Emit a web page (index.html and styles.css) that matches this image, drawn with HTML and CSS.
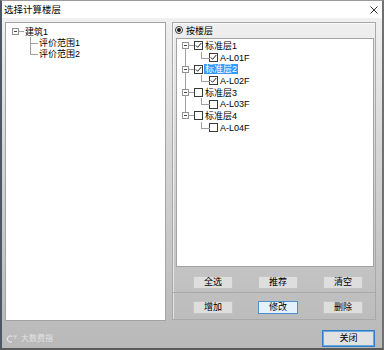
FILE: index.html
```html
<!DOCTYPE html>
<html lang="zh-CN">
<head>
    <meta charset="UTF-8">
    <title>选择计算楼层</title>
    <link rel="stylesheet" href="styles.css">
</head>
<body>
    <div class="window">
        <div class="titlebar">
            <span class="title">选择计算楼层</span>
            <svg class="close" width="8" height="8" viewBox="0 0 8 8">
                <path d="M0.5 0.5L7.5 7.5M7.5 0.5L0.5 7.5" stroke="#333" stroke-width="1"/>
            </svg>
        </div>

        <div class="main">
            <div class="tree-panel">
                <div class="lrow">
                    <span class="toggle"></span>
                    <span class="stub"></span>
                    <span class="label">建筑1</span>
                </div>
                <div class="lrow lrow-child">
                    <span class="elbow elbow-through"></span>
                    <span class="label">评价范围1</span>
                </div>
                <div class="lrow lrow-child">
                    <span class="elbow"></span>
                    <span class="label">评价范围2</span>
                </div>
            </div>

            <div class="side">
                <div class="side-top">
                    <div class="radio-row">
                        <span class="radio"></span>
                        <span>按楼层</span>
                    </div>
                    <div class="floor-tree">
                        <div class="prow">
                            <span class="rail rail-down"><span class="toggle"></span></span>
                            <span class="stub"></span>
                            <span class="check"><svg width="7" height="7" viewBox="0 0 7 7"><path d="M0.8 3.4L2.6 5.3L6.3 1" fill="none" stroke="#222" stroke-width="1"/></svg></span>
                            <span class="label">标准层1</span>
                        </div>
                        <div class="crow">
                            <span class="rail rail-through"></span>
                            <span class="elbow"></span>
                            <span class="check"><svg width="7" height="7" viewBox="0 0 7 7"><path d="M0.8 3.4L2.6 5.3L6.3 1" fill="none" stroke="#222" stroke-width="1"/></svg></span>
                            <span class="label">A-L01F</span>
                        </div>
                        <div class="prow">
                            <span class="rail rail-through"><span class="toggle"></span></span>
                            <span class="stub"></span>
                            <span class="check"><svg width="7" height="7" viewBox="0 0 7 7"><path d="M0.8 3.4L2.6 5.3L6.3 1" fill="none" stroke="#222" stroke-width="1"/></svg></span>
                            <span class="label selected">标准层2</span>
                        </div>
                        <div class="crow">
                            <span class="rail rail-through"></span>
                            <span class="elbow"></span>
                            <span class="check"><svg width="7" height="7" viewBox="0 0 7 7"><path d="M0.8 3.4L2.6 5.3L6.3 1" fill="none" stroke="#222" stroke-width="1"/></svg></span>
                            <span class="label">A-L02F</span>
                        </div>
                        <div class="prow">
                            <span class="rail rail-through"><span class="toggle"></span></span>
                            <span class="stub"></span>
                            <span class="check"></span>
                            <span class="label">标准层3</span>
                        </div>
                        <div class="crow">
                            <span class="rail rail-through"></span>
                            <span class="elbow"></span>
                            <span class="check"></span>
                            <span class="label">A-L03F</span>
                        </div>
                        <div class="prow">
                            <span class="rail rail-up"><span class="toggle"></span></span>
                            <span class="stub"></span>
                            <span class="check"></span>
                            <span class="label">标准层4</span>
                        </div>
                        <div class="crow">
                            <span class="rail"></span>
                            <span class="elbow"></span>
                            <span class="check"></span>
                            <span class="label">A-L04F</span>
                        </div>
                    </div>
                    <div class="btn-row">
                        <button class="btn">全选</button>
                        <button class="btn">推荐</button>
                        <button class="btn">清空</button>
                    </div>
                </div>
                <div class="side-bottom">
                    <div class="btn-row">
                        <button class="btn">增加</button>
                        <button class="btn btn-focus">修改</button>
                        <button class="btn">删除</button>
                    </div>
                </div>
            </div>
        </div>

        <div class="footer">
            <div class="brand">
                <svg width="12" height="8" viewBox="0 0 12 8">
                    <path d="M6 1.5A3 3 0 1 0 6 6.5" fill="none" stroke="#e4e4e4" stroke-width="1.2"/>
                    <path d="M7 1H11M9 1V4" stroke="#e4e4e4" stroke-width="0.8"/>
                </svg>
                <span>大数费指</span>
            </div>
            <button class="btn btn-close">关闭</button>
        </div>
    </div>
</body>
</html>
```

FILE: styles.css
```css
* {
    box-sizing: border-box;
}
body {
    margin: 0;
    font-family: "Liberation Sans", "Noto Sans CJK SC", sans-serif;
    font-size: 9px;
    color: #000;
}
.window {
    width: 384px;
    height: 350px;
    display: flex;
    flex-direction: column;
    border-top: 1px solid #9a9a9a;
    border-left: 2px solid #4d5866;
    border-right: 2px solid #707070;
    border-bottom: 2px solid #5a5a5a;
    background: linear-gradient(#f0f0f0 5%, #d8d8d8 40%, #bfbfbf 85%, #b9b9b9);
}
.titlebar {
    height: 17px;
    flex: none;
    background: #fff;
    display: flex;
    align-items: center;
    justify-content: space-between;
    padding: 0 4px 0 2px;
}
.title {
    font-size: 9.5px;
    line-height: 11px;
}
.main {
    display: flex;
    gap: 6px;
    padding: 4px 0 0 3px;
    flex: none;
}
.tree-panel {
    width: 161px;
    height: 299px;
    background: #fff;
    border: 1px solid #a3a3a3;
    padding-top: 3px;
}
.label {
    line-height: 10px;
    padding: 0 1px;
    white-space: nowrap;
}
.label.selected {
    background: #3399ff;
    color: #fff;
}

/* tree pieces */
.toggle {
    position: relative;
    z-index: 1;
    flex: none;
    width: 7px;
    height: 7px;
    border: 1px solid #919191;
    background: #fff;
}
.toggle::after {
    content: '';
    position: absolute;
    left: 1px;
    right: 1px;
    top: 2px;
    height: 1px;
    background: #444;
}
.stub {
    flex: none;
    width: 5px;
    border-top: 1px solid #a0a0a0;
}
.elbow {
    position: relative;
    flex: none;
    align-self: stretch;
    width: 7px;
}
.elbow::before {
    content: '';
    position: absolute;
    left: 0;
    top: 0;
    width: 100%;
    height: 50%;
    border-left: 1px solid #a0a0a0;
    border-bottom: 1px solid #a0a0a0;
}
.elbow-through::after {
    content: '';
    position: absolute;
    left: 0;
    top: 50%;
    bottom: 0;
    border-left: 1px solid #a0a0a0;
}
.rail {
    position: relative;
    flex: none;
    align-self: stretch;
    width: 7px;
    display: flex;
    align-items: center;
}
.rail::before {
    content: '';
    position: absolute;
    left: 3px;
    border-left: 1px solid #a0a0a0;
}
.rail-down::before {
    top: 50%;
    bottom: 0;
}
.rail-up::before {
    top: 0;
    bottom: 50%;
}
.rail-through::before {
    top: 0;
    bottom: 0;
}
.check {
    flex: none;
    width: 9px;
    height: 9px;
    border: 1px solid #3a3a3a;
    background: #fff;
    margin-right: 1px;
    display: flex;
}
.check svg {
    display: block;
}

/* left tree */
.lrow {
    display: flex;
    align-items: center;
    height: 11px;
    padding-left: 6px;
}
.lrow-child {
    padding-left: 24px;
}
.lrow-child .elbow {
    margin-right: 1px;
}

/* right side */
.side {
    width: 204px;
    height: 298px;
    border: 1px solid #a9a9a9;
    box-shadow: inset 1px 1px 0 rgba(255, 255, 255, 0.6);
    display: flex;
    flex-direction: column;
}
.side-top {
    height: 270px;
    border-bottom: 1px solid #a9a9a9;
}
.side-bottom {
    flex: 1;
    padding-top: 8px;
}
.radio-row {
    display: flex;
    align-items: center;
    gap: 3px;
    height: 12px;
    margin: 1px 0 2px 2px;
}
.radio {
    width: 8px;
    height: 8px;
    border: 1px solid #333;
    border-radius: 50%;
    background: #fff;
    display: flex;
    align-items: center;
    justify-content: center;
}
.radio::after {
    content: '';
    width: 4px;
    height: 4px;
    border-radius: 50%;
    background: #1a1a1a;
}
.floor-tree {
    margin-left: 3px;
    width: 198px;
    height: 229px;
    background: #fff;
    border: 1px solid #a3a3a3;
    padding-top: 1px;
}
.prow,
.crow {
    display: flex;
    align-items: center;
    height: 11.7px;
    padding-left: 5px;
}
.crow .elbow {
    width: 8px;
    margin-left: 12px;
}
.btn-row {
    display: flex;
    gap: 25px;
    padding-left: 20px;
}
.side-top .btn-row {
    margin-top: 9px;
}
.btn {
    width: 40px;
    height: 13px;
    padding: 0;
    font-family: inherit;
    font-size: 9px;
    line-height: 11px;
    color: #000;
    background: #dedede;
    border: 1px solid #c4c4c4;
}
.btn-focus {
    background: #e5f1fb;
    border-color: #4a90d4;
}

/* footer */
.footer {
    flex: 1;
    display: flex;
    justify-content: space-between;
    align-items: flex-start;
    padding: 9px 7px 0 4px;
}
.brand {
    display: flex;
    align-items: center;
    gap: 3px;
    margin-top: 4px;
    color: #e2e2e2;
    font-size: 8px;
    line-height: 10px;
}
.btn-close {
    width: 53px;
    height: 17px;
    background: #e1e1e1;
    border: 1px solid #2f7dc8;
    box-shadow: inset 0 0 0 1px #69a7e0;
}
```
